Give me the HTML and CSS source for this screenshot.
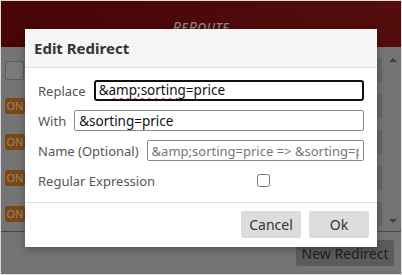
FILE: index.html
```html
<!DOCTYPE html>
<html lang="en">
<head>
  <meta charset="UTF-8" />
  <title>ReRoute</title>
  <meta name="viewport" content="width=device-width, initial-scale=1.0" />
  <link rel="stylesheet" href="styles.css">
</head>
<body>

<div class="app">
  <header>
    <h1>ReRoute</h1>
  </header>

  <div class="list-wrap">
    <div class="list">
      <div class="row top-row">
        <span class="select-all"></span>
        <div class="card"></div>
      </div>
      <div class="row"><span class="badge">ON</span><div class="card"></div></div>
      <div class="row"><span class="badge">ON</span><div class="card"></div></div>
      <div class="row"><span class="badge">ON</span><div class="card"></div></div>
      <div class="row"><span class="badge">ON</span><div class="card"></div></div>
    </div>
    <div class="scrollbar">
      <span class="arrow up"></span>
      <span class="arrow down"></span>
    </div>
  </div>

  <footer>
    <button class="new-btn">New Redirect</button>
  </footer>

  <!-- dimmed page behind, dialog on top -->
  <div class="modal">
    <div class="modal-head">
      <h2>Edit Redirect</h2>
    </div>
    <div class="modal-body">
      <label class="field-row">
        <span class="label">Replace</span>
        <div class="input focused" contenteditable="true">&amp;<span class="misspelt">amp;sorting</span>=price</div>
      </label>
      <label class="field-row">
        <span class="label">With</span>
        <input class="input" type="text" value="&amp;sorting=price">
      </label>
      <label class="field-row">
        <span class="label">Name (Optional)</span>
        <input class="input small" type="text" placeholder="&amp;amp;sorting=price => &amp;sorting=price">
      </label>
      <label class="field-row">
        <span class="label">Regular Expression</span>
        <span class="check-cell"><input type="checkbox"></span>
      </label>
    </div>
    <div class="modal-foot">
      <button class="btn">Cancel</button>
      <button class="btn">Ok</button>
    </div>
  </div>
</div>

</body>
</html>
```

FILE: styles.css
```css
* {
  box-sizing: border-box;
}
body {
  margin: 0;
  font-family: 'Noto Sans', 'Open Sans', sans-serif;
  font-size: 13px;
  color: #333;
  background: #fff;
}
.app {
  position: relative;
  width: 402px;
  height: 275px;
  border: 1px solid #dcdcdc;
  background: #747474;
  overflow: hidden;
  display: flex;
  flex-direction: column;
}
header {
  height: 46px;
  background: linear-gradient(to right, #470505, #530d0d);
  text-align: center;
}
header h1 {
  margin: 0;
  padding-top: 15px;
  font-size: 15px;
  font-weight: normal;
  font-style: italic;
  font-variant: small-caps;
  letter-spacing: 0.5px;
  color: #8a8a8a;
}
.list-wrap {
  display: flex;
  height: 185px;
  border-bottom: 1px solid #474747;
}
.list {
  flex: 1;
  padding: 10px 0 0 4px;
  display: flex;
  flex-direction: column;
  gap: 10px;
}
.row {
  display: flex;
  align-items: center;
  gap: 6px;
  height: 26px;
}
.select-all {
  width: 19px;
  height: 19px;
  border: 1px solid #5c5c5c;
  border-radius: 2px;
  background: #7a7a7a;
}
.badge {
  width: 20px;
  height: 16px;
  background: #7a4817;
  border-radius: 2px;
  color: #a08466;
  font-size: 11px;
  line-height: 16px;
  text-align: center;
}
.card {
  flex: 1;
  height: 26px;
  background: #686868;
  border-radius: 4px;
}
.scrollbar {
  width: 17px;
  margin-left: 2px;
  display: flex;
  flex-direction: column;
  justify-content: space-between;
  align-items: center;
  padding: 11px 0 8px;
}
.arrow {
  width: 0;
  height: 0;
  border-left: 4px solid transparent;
  border-right: 4px solid transparent;
}
.arrow.up {
  border-bottom: 4px solid #3e3e3e;
}
.arrow.down {
  border-top: 4px solid #3e3e3e;
}
footer {
  flex: 1;
  display: flex;
  justify-content: flex-end;
  align-items: flex-start;
  padding: 8px 7px 0 0;
}
.new-btn {
  font-family: inherit;
  font-size: 14px;
  height: 26px;
  width: 98px;
  padding: 0;
  border: none;
  border-radius: 2px;
  background: #5b5b5b;
  color: #1e1e1e;
}

/* dialog */
.modal {
  position: absolute;
  left: 24px;
  top: 28px;
  width: 352px;
  height: 218px;
  background: #fff;
  box-shadow: 0 2px 8px rgba(0, 0, 0, 0.3);
  display: flex;
  flex-direction: column;
}
.modal-head {
  height: 39px;
  background: #f5f5f5;
  border-bottom: 1px solid #dedede;
  padding: 0 9px;
  display: flex;
  align-items: center;
}
.modal-head h2 {
  margin: 0;
  font-size: 15px;
  font-weight: bold;
  color: #333;
}
.modal-body {
  padding: 12px 13px 11px;
  display: flex;
  flex-direction: column;
  gap: 9px;
  border-bottom: 1px solid #dedede;
}
.field-row {
  display: flex;
  align-items: center;
  gap: 8px;
  height: 21px;
}
.label {
  color: #555;
  white-space: nowrap;
}
.input {
  flex: 1;
  min-width: 0;
  height: 21px;
  border: 1px solid #8a8a8a;
  border-radius: 2px;
  padding: 0 4px;
  font-family: inherit;
  font-size: 13.5px;
  color: #111;
  line-height: 19px;
  white-space: nowrap;
  overflow: hidden;
  outline: none;
}
.input.focused {
  border: 2px solid #111;
  border-radius: 3px;
  line-height: 17px;
  padding: 0 3px;
}
.input.small {
  font-size: 13px;
}
.input.small::placeholder {
  color: #777;
}
.misspelt {
  text-decoration: underline wavy #d33;
  text-decoration-thickness: 1px;
  text-underline-offset: 2px;
}
.check-cell {
  flex: 1;
  display: flex;
  justify-content: center;
}
.check-cell input {
  margin: 0;
  width: 13px;
  height: 13px;
}
.modal-foot {
  flex: 1;
  display: flex;
  justify-content: flex-end;
  align-items: flex-start;
  gap: 8px;
  padding: 8px 8px 0 0;
}
.btn {
  width: 60px;
  height: 27px;
  border: none;
  border-radius: 2px;
  background: #dcdcdc;
  color: #333;
  font-family: inherit;
  font-size: 14px;
}
```
